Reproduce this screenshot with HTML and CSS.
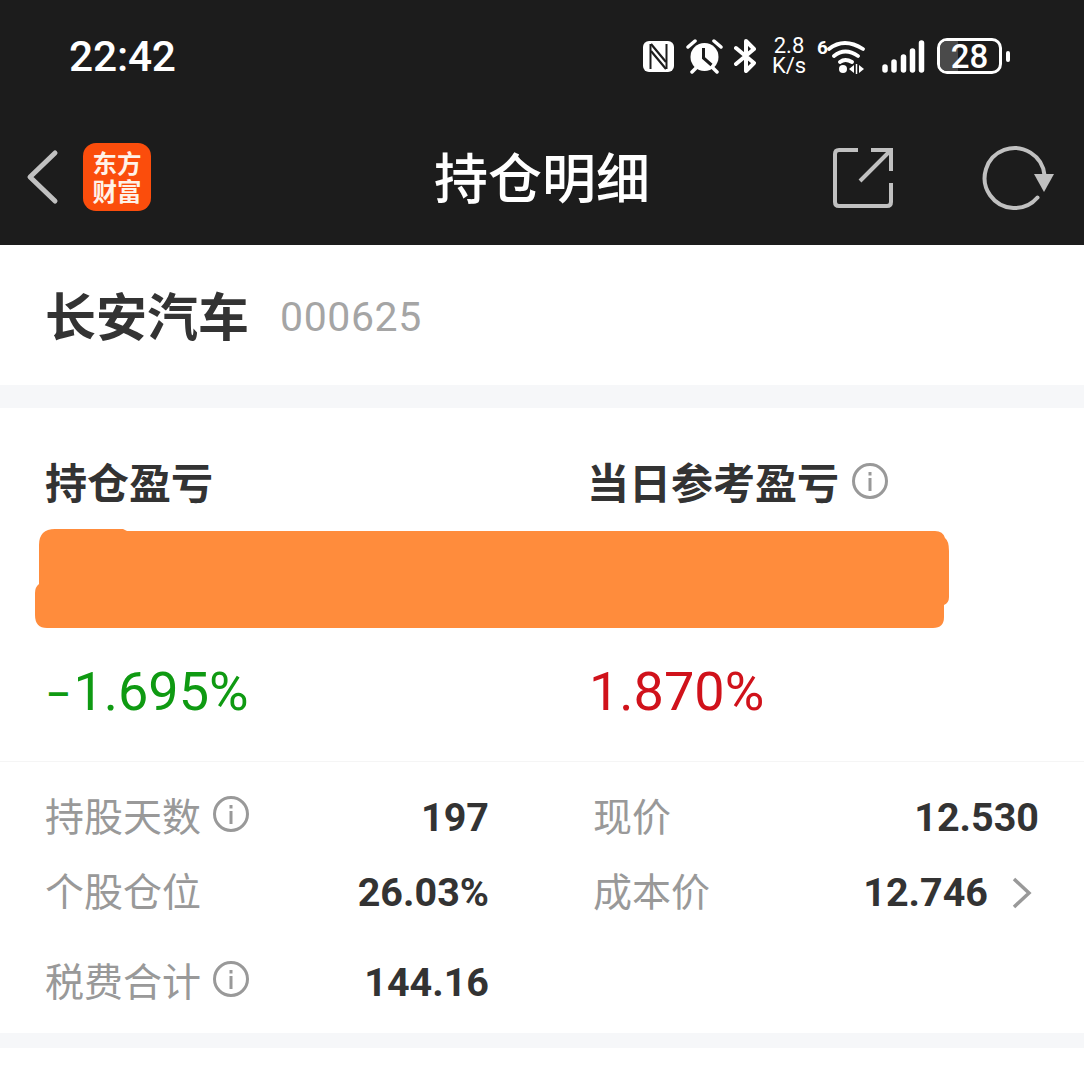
FILE: index.html
```html
<!DOCTYPE html>
<html lang="zh">
<head>
<meta charset="utf-8">
<title>持仓明细</title>
<link rel="stylesheet" href="styles.css">
</head>
<body>
<header class="top">
  <div class="status">
    <span class="time">22:42</span>
    <div class="status-icons">
      <svg class="i-nfc" width="31" height="31" viewBox="0 0 31 31"><rect x="0" y="0" width="31" height="31" rx="6" fill="#fff"/><path d="M7.500 3V28M23.500 3V28" stroke="#1c1c1c" stroke-width="2"/><path d="M8 3L23 21M8 10L23 28" stroke="#1c1c1c" stroke-width="2.200"/></svg>
      <svg class="i-alarm" width="37" height="35" viewBox="0 0 37 35"><circle cx="18.500" cy="18" r="14" fill="#fff"/><path d="M17.500 9v10l8 7" fill="none" stroke="#1c1c1c" stroke-width="3"/><path d="M2 8l7-6M35 8l-7-6M6 33l4-4M31 33l-4-4" stroke="#fff" stroke-width="3.500" stroke-linecap="round"/></svg>
      <svg class="i-bt" width="22" height="34" viewBox="0 0 22 34"><path d="M2 9l18 15-8 8V2l8 8L2 25" fill="none" stroke="#fff" stroke-width="4" stroke-linejoin="round" stroke-linecap="round"/></svg>
      <div class="speed"><span>2.8</span><span>K/s</span></div>
      <div class="wifi"><span class="wifi-six">6</span>
        <svg width="38" height="35" viewBox="0 0 38 35"><path d="M2 10Q17 -2 36 10M7 17Q18 8 31 17M13 23Q18 19 25 23" fill="none" stroke="#fff" stroke-width="3.800" stroke-linecap="round"/><circle cx="16" cy="30" r="4" fill="#fff"/><path d="M22 30l5-4v8zM32 26l5 4-5 4z" fill="#fff"/><path d="M29.500 25v10" stroke="#fff" stroke-width="1.500"/></svg>
      </div>
      <svg class="i-signal" width="43" height="35" viewBox="0 0 43 35"><g stroke="#fff" stroke-width="5.500" stroke-linecap="round"><path d="M3 28v3M12 23v8M21.500 18v13M30.500 12v19M39.500 4v27"/></g></svg>
      <div class="battery"><div class="battery-body"><span class="battery-fill"></span><span class="battery-num">28</span></div><span class="battery-nub"></span></div>
    </div>
  </div>
  <nav class="nav">
    <svg class="back" width="34" height="56" viewBox="0 0 34 56"><path d="M30 4L5 28l25 24" fill="none" stroke="#c0c0c0" stroke-width="5" stroke-linecap="round" stroke-linejoin="round"/></svg>
    <div class="logo"><span>东方</span><span>财富</span></div>
    <h1 class="title">持仓明细</h1>
    <svg class="share" width="60" height="60" viewBox="0 0 60 60"><path d="M25 2H6Q2 2 2 6V54Q2 58 6 58H54Q58 58 58 54V35" fill="none" stroke="#c0c0c0" stroke-width="4"/><path d="M38 2H58V23M57 3L27 33" fill="none" stroke="#c0c0c0" stroke-width="4"/></svg>
    <svg class="refresh" width="72" height="66" viewBox="0 0 72 66"><path d="M55.500 52.500A30 30 0 1 1 62.500 30" fill="none" stroke="#c0c0c0" stroke-width="4" stroke-linecap="round"/><path d="M52 29H72L62 47Z" fill="#c0c0c0"/></svg>
  </nav>
</header>

<section class="stock">
  <span class="stock-name">长安汽车</span>
  <span class="stock-code">000625</span>
</section>

<section class="panel">
  <div class="pl">
    <div class="pl-heads">
      <div class="pl-head">持仓盈亏</div>
      <div class="pl-head">当日参考盈亏
        <svg class="info" width="36" height="36" viewBox="0 0 36 36"><use href="#info-glyph"/></svg>
      </div>
    </div>
    <svg class="redact" width="915" height="100" viewBox="0 0 915 100"><path d="M4 16Q4 0 20 0L88 0L92 2L900 2Q908 2 910 9Q914 12 914 22L914 68Q914 74 909 76L909 88Q909 99 898 99L12 99Q0 99 0 86L0 64Q0 58 4 55Z" fill="#ff8c3c"/></svg>
    <div class="pl-pcts">
      <div class="pct pct-down"><span class="dash">–</span>1.695%</div>
      <div class="pct pct-up">1.870%</div>
    </div>
  </div>
  <div class="facts">
    <div class="fact"><span class="fact-label">持股天数<svg class="info" width="36" height="36" viewBox="0 0 36 36"><use href="#info-glyph"/></svg></span><span class="fact-value">197</span></div>
    <div class="fact"><span class="fact-label">现价</span><span class="fact-value">12.530</span></div>
    <div class="fact"><span class="fact-label">个股仓位</span><span class="fact-value">26.03%</span></div>
    <div class="fact"><span class="fact-label">成本价</span><span class="fact-value fact-link">12.746<svg class="chev" width="20" height="32" viewBox="0 0 20 32"><path d="M2 2l15 14L2 30" fill="none" stroke="#999" stroke-width="3.500"/></svg></span></div>
    <div class="fact fact-tall"><span class="fact-label">税费合计<svg class="info" width="36" height="36" viewBox="0 0 36 36"><use href="#info-glyph"/></svg></span><span class="fact-value">144.16</span></div>
  </div>
</section>
<div class="tail"></div>

<svg class="defs" width="0" height="0"><defs><g id="info-glyph"><circle cx="18" cy="18" r="16.500" fill="none" stroke="#999" stroke-width="3"/><rect x="16.500" y="15" width="3" height="13" fill="#999"/><rect x="16.500" y="9" width="3" height="3.500" fill="#999"/></g></defs></svg>
</body>
</html>
```
FILE: styles.css
```css
* { box-sizing: border-box; }
html, body { margin: 0; padding: 0; background: #fff; }
body {
  width: 1084px;
  height: 1082px;
  overflow: hidden;
  font-family: Roboto, "Noto Sans CJK SC", sans-serif;
  color: #333;
}
.top { background: #1c1c1c; height: 245px; color: #fff; }
.status {
  height: 110px;
  padding: 0 74px 0 69px;
  display: flex;
  align-items: center;
  justify-content: space-between;
}
.time { font-size: 42.500px; font-weight: 500; letter-spacing: -0.2px; line-height: 1; margin-top: 4px; }
.status-icons { display: flex; align-items: center; height: 36px; margin-top: 2px; }
.i-nfc { margin-right: 12px; }
.i-alarm { margin-right: 11px; }
.i-bt { margin-right: 16px; }
.speed {
  display: flex; flex-direction: column; align-items: center;
  font-size: 22px; font-weight: 400; line-height: 20px; width: 34px; margin-right: 11px;
}
.wifi { display: flex; align-items: flex-start; margin-right: 17px; position: relative; }
.wifi-six { font-size: 19px; font-weight: 700; line-height: 18px; width: 10px; }
.i-signal { margin-right: 12px; }
.battery { display: flex; align-items: center; gap: 4px; }
.battery-body {
  width: 65px; height: 36px; border: 3px solid #fff; border-radius: 10px;
  position: relative; display: flex; align-items: center; justify-content: center; overflow: hidden;
}
.battery-fill { position: absolute; left: 0; top: 0; bottom: 0; width: 18px; background: #4a4a4a; }
.battery-num { position: relative; font-size: 33px; font-weight: 500; line-height: 1; }
.battery-nub { width: 4px; height: 11px; background: #fff; border-radius: 2px; }

.nav { height: 135px; display: flex; align-items: center; position: relative; padding: 0 30px 0 25px; }
.back { margin-top: -2px; }
.logo {
  width: 68px; height: 68px; border-radius: 13px; background: #fb4d0c; margin: -2px 0 0 24px;
  display: flex; flex-direction: column; align-items: center; justify-content: center;
  font-family: "Noto Sans CJK SC", sans-serif; font-size: 24.500px; font-weight: 700; line-height: 28px; color: #fff2e8;
}
.title {
  position: absolute; left: 434px; top: 50%; margin: -42px 0 0; height: 80px;
  font-family: "Noto Sans CJK SC", sans-serif; font-size: 54px; font-weight: 500; line-height: 80px; color: #fff;
}
.share { margin-left: auto; margin-right: 89px; }

.stock {
  height: 140px; padding: 0 0 0 45px;
  display: flex; align-items: center; gap: 31px;
}
.stock-name { font-family: "Noto Sans CJK SC", sans-serif; font-size: 51px; font-weight: 700; color: #333; margin-bottom: 3px; }
.stock-code { font-size: 41px; color: #a5a5a5; letter-spacing: 0.6px; margin-top: 4px; }

.panel { border-top: 23px solid #f6f7f9; border-bottom: 15px solid #f6f7f9; }
.pl { height: 354px; padding-top: 45px; border-bottom: 1px solid #f5f5f5; }
.pl-heads, .pl-pcts { display: grid; grid-template-columns: 542px 1fr; padding-left: 47px; }
.pl-heads { margin-left: -2px; }
.pl-head {
  font-family: "Noto Sans CJK SC", sans-serif; font-size: 42px; font-weight: 700; line-height: 56px; color: #333;
  display: flex; align-items: center; gap: 13px;
}
.redact { display: block; margin: 20px 0 0 35px; }
.pl-pcts { margin-top: 25px; }
.pct { font-size: 54px; line-height: 76px; font-weight: 400; }
.pct-down { color: #0f9a12; }
.pct-up { color: #d0121b; }
.dash { font-size: 38px; line-height: 1; vertical-align: 2px; font-weight: 500; margin: 0 3px 0 -1px; }

.facts {
  display: grid; grid-template-columns: 442px 444px; column-gap: 106px;
  padding: 18px 0 14px 47px; height: 271px;
  grid-template-rows: 75px 75px 90px; align-items: start;
}
.fact { display: flex; justify-content: space-between; align-items: center; height: 75px; }
.fact-tall { height: 90px; padding-top: 15px; }
.fact-label {
  font-family: "Noto Sans CJK SC", sans-serif; font-size: 39px; color: #999;
  display: flex; align-items: center; gap: 12px; margin: 0 0 7px -2px;
}
.fact-value { font-size: 39.500px; font-weight: 700; color: #333; display: flex; align-items: center; }
.fact-link { position: relative; padding-right: 51px; }
.chev { position: absolute; right: 7px; top: 50%; margin-top: -16px; }
.defs { position: absolute; }
```
